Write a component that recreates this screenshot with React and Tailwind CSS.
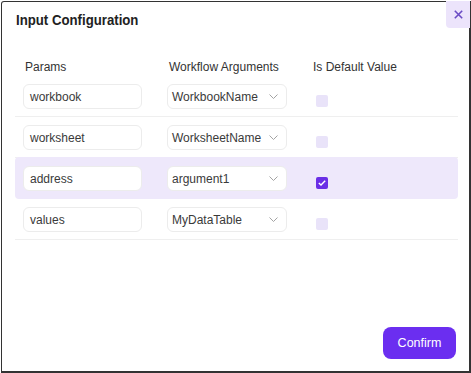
import React from "react";

const rows = [
  { param: "workbook", arg: "WorkbookName", checked: false },
  { param: "worksheet", arg: "WorksheetName", checked: false },
  { param: "address", arg: "argument1", checked: true, active: true },
  { param: "values", arg: "MyDataTable", checked: false },
];

function Chevron() {
  return (
    <svg width="9" height="5" viewBox="0 0 9 5" fill="none" className="shrink-0">
      <path d="M0.5 0.5 L4.5 4.5 L8.5 0.5" stroke="#a3a3a3" strokeWidth="1" />
    </svg>
  );
}

function Checkbox({ checked }) {
  if (checked) {
    return (
      <div className="w-[12px] h-[12px] rounded-[2px] bg-[#6a2ee6] flex items-center justify-center">
        <svg width="8" height="6" viewBox="0 0 8 6" fill="none">
          <path d="M0.8 3 L3 5 L7.2 0.8" stroke="#ffffff" strokeWidth="1.4" />
        </svg>
      </div>
    );
  }
  return <div className="w-[12px] h-[12px] rounded-[2px] bg-[#e9e3f9]" />;
}

export default function App() {
  return (
    <div
      className="w-[471px] h-[373px] bg-white overflow-hidden"
      style={{ fontFamily: '"Liberation Sans", Arial, sans-serif' }}
    >
      <div className="ml-[1px] mt-[1px] w-[470px] h-[372px] border-l border-t border-r-2 border-b-2 border-[#333333] rounded-tl-[3px] flex flex-col">
        <div className="flex justify-between h-[28px]">
          <div className="pl-[14px] pt-[6px]">
            <span className="inline-block text-[15px] leading-[18px] font-bold text-[#222222] scale-x-[0.88] origin-left">
              Input Configuration
            </span>
          </div>
          <div className="w-[24px] h-[27px] bg-[#ece4fb] rounded-bl-[4px] flex items-center justify-center mr-[-1px] -mt-[1px]">
            <svg width="9" height="9" viewBox="0 0 9 9" fill="none">
              <path d="M0.8 0.8 L8.2 8.2 M8.2 0.8 L0.8 8.2" stroke="#6a4bc4" strokeWidth="1.6" />
            </svg>
          </div>
        </div>

        <div className="ml-[13px] w-[443px] text-[12px] text-[#333333]">
          <div className="grid grid-cols-[144px_144px_1fr] pt-[29px] pb-[1px] leading-[16px]">
            <div className="pl-[10px]">Params</div>
            <div className="pl-[10px]">Workflow Arguments</div>
            <div className="pl-[10px]">Is Default Value</div>
          </div>
          {rows.map((r) => (
            <div
              key={r.param}
              className={
                r.active
                  ? "grid grid-cols-[144px_144px_1fr] pb-[7px] border-b border-transparent bg-[#eee8fb] rounded-[4px] -mt-[1px] pt-[9px]"
                  : "grid grid-cols-[144px_144px_1fr] pt-[8px] pb-[7px] border-b border-[#efefef]"
              }
            >
              <div className="pl-[8px]">
                <div className="w-[119px] h-[25px] bg-white border border-[#ececec] rounded-[6px] flex items-center pl-[6px] text-[12px] text-[#3a3a3a]">
                  {r.param}
                </div>
              </div>
              <div className="pl-[8px]">
                <div className="w-[120px] h-[25px] bg-white border border-[#ececec] rounded-[6px] flex items-center justify-between pl-[4px] pr-[8px] text-[12px] text-[#3a3a3a]">
                  <span>{r.arg}</span>
                  <Chevron />
                </div>
              </div>
              <div className="pl-[13px] pt-[11px]">
                <Checkbox checked={r.checked} />
              </div>
            </div>
          ))}
        </div>

        <div className="mt-auto flex justify-end pr-[13px] pb-[12px]">
          <div className="w-[73px] h-[32px] rounded-[8px] bg-[#6b2ef0] text-white text-[12.5px] flex items-center justify-center">
            Confirm
          </div>
        </div>
      </div>
    </div>
  );
}
